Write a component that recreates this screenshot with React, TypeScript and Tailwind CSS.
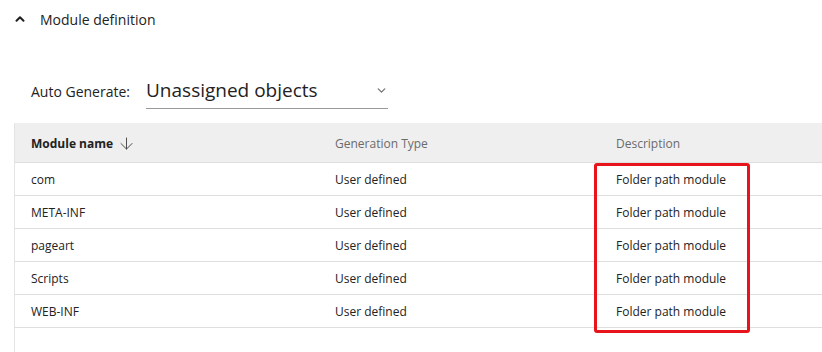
import { ChevronDown, ChevronUp, ArrowDown } from "lucide-react";

const rows = [
  ["com", "User defined", "Folder path module"],
  ["META-INF", "User defined", "Folder path module"],
  ["pageart", "User defined", "Folder path module"],
  ["Scripts", "User defined", "Folder path module"],
  ["WEB-INF", "User defined", "Folder path module"],
];

export default function App() {
  return (
    <div className="w-[822px] h-[352px] overflow-hidden bg-white text-[#222] font-['Open_Sans',sans-serif]">
      <div className="flex items-center h-[38px] pl-[13px]">
        <ChevronUp size={14} strokeWidth={3.5} className="text-[#222]" />
        <span className="ml-[13px] text-[14px]">Module definition</span>
      </div>

      <div className="flex items-center mt-[35px] pl-[31px] h-[36px]">
        <span className="text-[14px] pt-[1px]">Auto Generate:</span>
        <div className="ml-[16px] w-[242px] h-[36px] flex items-center justify-between border-b border-[#999] pb-[1px]">
          <span className="text-[19px] leading-none">Unassigned objects</span>
          <ChevronDown size={13} strokeWidth={2.5} className="text-[#777] mr-[0px]" />
        </div>
      </div>

      <div className="relative ml-[14px] mt-[14px] h-[240px] border-l border-[#e4e4e4]">
        <div className="flex items-center h-[40px] bg-[#efefef] border-b border-[#dedede] text-[12px] pt-[2px]">
          <div className="w-[320px] pl-[16px] flex items-center font-bold text-[#222]">
            Module name
            <ArrowDown size={19} strokeWidth={1.2} className="ml-[4px] text-[#444]" />
          </div>
          <div className="w-[281px] text-[#6b6b6b]">Generation Type</div>
          <div className="text-[#6b6b6b]">Description</div>
        </div>
        {rows.map(([name, type, desc]) => (
          <div key={name} className="flex items-center h-[33px] border-b border-[#dedede] text-[12px] text-[#222] pt-[1px]">
            <div className="w-[320px] pl-[16px]">{name}</div>
            <div className="w-[281px]">{type}</div>
            <div>{desc}</div>
          </div>
        ))}
        <div className="absolute left-[579px] top-[40px] w-[156px] h-[170px] border-[3px] border-[#e8141c] rounded-[3px]" />
      </div>
    </div>
  );
}
